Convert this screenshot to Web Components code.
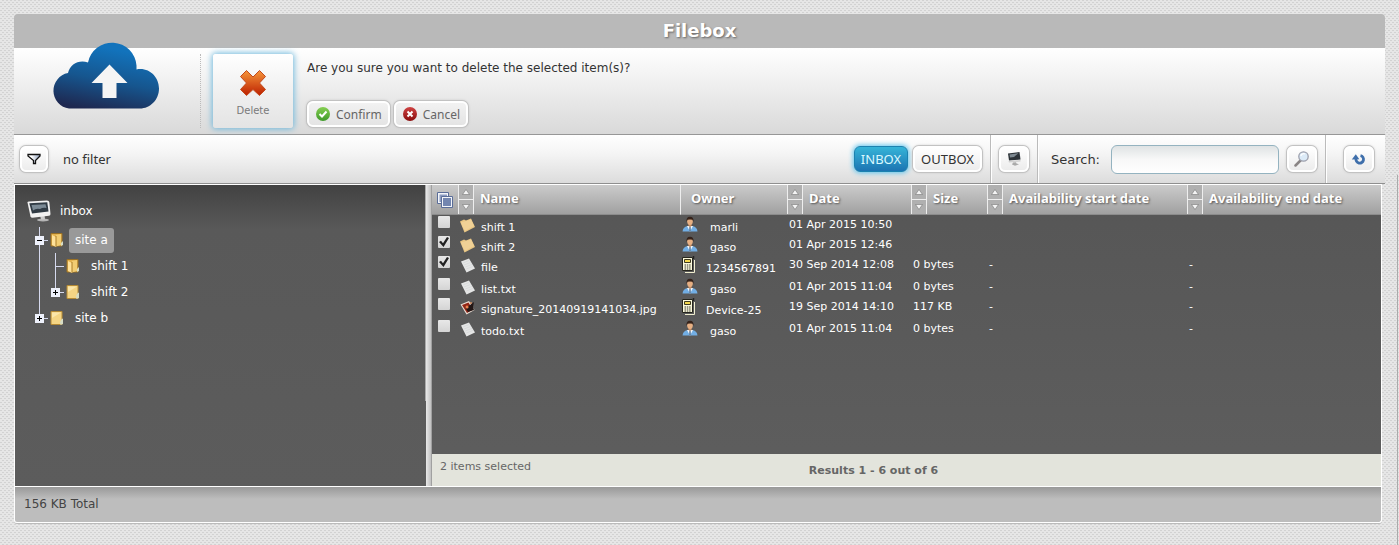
<!DOCTYPE html>
<html lang="en">
<head>
<meta charset="utf-8">
<title>Filebox</title>
<style>
  html { min-height: 100%; background: #e7e7e7; }
  body {
    margin: 0;
    padding: 14px;
    min-height: 100vh;
    box-sizing: border-box;
    font: 12px/18px "DejaVu Sans", Verdana, sans-serif;
    color: #333;
    /* page edge on the right, then the woven dots */
    background:
      linear-gradient(#aaa, #aaa) right 1px top 175px / 1px 100% no-repeat,
      conic-gradient(from 90deg at 2px 1px, transparent 270deg, #d2d2d2 0) 0 0 / 4px 4px,
      conic-gradient(from 90deg at 2px 1px, transparent 270deg, #d2d2d2 0) 2px 2px / 4px 4px,
      #e6e6e6;
  }
</style>
</head>
<body>
<file-box heading="Filebox">
  <confirm-ribbon slot="ribbon" question="Are you sure you want to delete the selected item(s)?">
    <box-button slot="actions" icon="ok">Confirm</box-button>
    <box-button slot="actions" icon="no">Cancel</box-button>
  </confirm-ribbon>
  <tool-bar slot="toolbar"></tool-bar>
  <folder-tree slot="tree" label="inbox">
    <tree-node label="site a" state="open" folder="open" selected>
      <tree-node label="shift 1" folder="open"></tree-node>
      <tree-node label="shift 2" state="closed" last></tree-node>
    </tree-node>
    <tree-node label="site b" state="closed" last></tree-node>
  </folder-tree>
  <file-list slot="list"></file-list>
  <span slot="status">156 KB Total</span>
</file-box>

<script>
const ICONS = {
  cloud: `<svg width="108" height="68" viewBox="0 0 108 68">
    <defs><linearGradient id="c" x1=".6" y1="0" x2=".3" y2="1"><stop offset=".1" stop-color="#1273bc"/><stop offset=".55" stop-color="#16568f"/><stop offset="1" stop-color="#1e2850"/></linearGradient></defs>
    <path fill="url(#c)" d="M18 67.500A18 18 0 0 1 17 32C19 23 28 18.500 37 21.500A24.500 24.500 0 0 1 85.500 24.500L85.500 28.500C98 26 108 36 108 47.500C108 59 99 67.500 89 67.500Z"/>
    <path fill="#f5f5f5" d="M58.500 23.500L76.500 42H65.500V57H51.500V42H40.500Z"/></svg>`,
  cross: `<svg width="28" height="28" viewBox="0 0 28 28">
    <defs><linearGradient id="x" x2="0" y2="1"><stop offset=".1" stop-color="#f08a35"/><stop offset=".9" stop-color="#c22b06"/></linearGradient></defs>
    <path fill="url(#x)" stroke="#c2491c" d="M7.500 1.500L14 8L20.500 1.500L26.500 7.500L20.500 14L26.500 20.500L20.500 26.500L14 20.500L7.500 26.500L1.500 20.500L7.500 14L1.500 7.500Z" stroke-linejoin="round"/></svg>`,
  ok: `<svg width="16" height="16" viewBox="0 0 16 16">
    <defs><linearGradient id="g" x2="0" y2="1"><stop stop-color="#86cf52"/><stop offset="1" stop-color="#3f9a2a"/></linearGradient></defs>
    <circle cx="8" cy="8" r="7" fill="url(#g)"/><path d="M4.500 8L7 10.500L11.500 5.500" fill="none" stroke="#fff" stroke-width="2"/></svg>`,
  no: `<svg width="16" height="16" viewBox="0 0 16 16">
    <defs><linearGradient id="r" x2="0" y2="1"><stop stop-color="#cf4343"/><stop offset="1" stop-color="#8a0d0d"/></linearGradient></defs>
    <circle cx="8" cy="8" r="7" fill="url(#r)"/><path d="M5.500 5.500L10.500 10.500M10.500 5.500L5.500 10.500" stroke="#fff" stroke-width="2"/></svg>`,
  funnel: `<svg width="14" height="14" viewBox="1 1 14 14">
    <defs><linearGradient id="f"><stop offset=".3" stop-color="#fff"/><stop offset="1" stop-color="#8fa0bd"/></linearGradient></defs>
    <path d="M2 3.500H14V5L9.500 9.500V12.500H7.500V9.500L2 5Z" fill="url(#f)" stroke="#111" stroke-width="1.300"/></svg>`,
  screen: `<svg width="16" height="16" viewBox="0 0 16 16">
    <path d="M2 2.500L13.500 1L14.500 8.500L3 9.500Z" fill="#2c3237"/><path d="M3.500 3.500L12.500 2.200L8 6L4 6.500Z" fill="#7d8890"/>
    <path d="M2.500 10L14.500 9V10.500L3 11.500Z" fill="#d0d0d0"/><path d="M7 11.500L10 11.300L10.500 12.500L13 13.300L9 14.800L6 13.500Z" fill="#aaa"/></svg>`,
  lens: `<svg width="16" height="16" viewBox="1 1 16 16">
    <path d="M7.500 10.500L2.500 15.500" stroke="#8a8585" stroke-width="2.500" stroke-linecap="round"/>
    <circle cx="10.500" cy="6.500" r="4.700" fill="#dcebf8" stroke="#9c9fac" stroke-width="1.300"/><path d="M7.800 6A3 3 0 0 1 12 4" fill="none" stroke="#fff" stroke-width="1.300"/></svg>`,
  refresh: `<svg width="16" height="16" viewBox="0 0 16 16">
    <path d="M5 7.500A3.800 3.800 0 1 0 9.500 4.600" fill="none" stroke="#3f6fab" stroke-width="2.800"/>
    <path d="M.8 8.500L4.800 3.200L8.300 8.300Z" fill="#3f6fab"/></svg>`,
  monitor: `<svg width="24" height="22" viewBox="0 0 24 22">
    <ellipse cx="16" cy="20" rx="6" ry="1.500" fill="#b5b5b5"/><path d="M13 15L17.500 14.500L18 19.500H14Z" fill="#ccc"/>
    <path d="M.5 2.500Q.5 1.500 2 1.400L20 .5Q22 .5 22.300 2L23.500 14Q23.500 15.500 22 15.700L5.500 17.800Q4 17.800 3.500 16.500Z" fill="#f2f2f2"/>
    <path d="M2.300 3.200L20.300 2.300L21.500 11.500L5 13.500Z" fill="#303b44"/><path d="M4.500 5L18.500 4.200L19.500 8Q16 7 13 9Q9 8 6 10.500Z" fill="#7b8a95"/></svg>`,
  folderOpen: `<svg width="14" height="16" viewBox="0 0 14 16">
    <path d="M1 1.500H12V14H1Z" fill="#e3b24e" stroke="#9a7125"/><path d="M2 3L6 5V15L2 13Z" fill="#ffe199"/><path d="M6 3L11 2V13L6 14.500Z" fill="#f1cc72"/><path d="M6 4V14.500" stroke="#a97c28"/><path d="M11 11L13 9V13L11 14Z" fill="#d6dcc5"/></svg>`,
  folder: `<svg width="14" height="16" viewBox="0 0 14 16">
    <path d="M1 1.500H12V14.500H1Z" fill="#f5d584" stroke="#b58a35"/><path d="M2 2.500H11L2 8Z" fill="#fbe6aa"/><path d="M10 12L12 8.500L13 9V14L10.500 15Z" fill="#d6dcc5"/></svg>`,
  dir: `<svg width="18" height="17" viewBox="0 0 18 17"><path d="M1 4.500L5 2.500L7 3.500L12 1.500L16 10L5.500 15.500Z" fill="#e9c684"/><path d="M1.800 5.500L12 2.500L15 9L6 14Z" fill="#f0d196"/></svg>`,
  page: `<svg width="18" height="17" viewBox="0 0 18 17"><path d="M2 4.500L10 1.500L16 11.500L7.500 15.500Z" fill="#e4e5e5"/><path d="M4 6L10 3.500M5 8L11.500 5.500M6.300 10L12.800 7.500M7.300 12L13.800 9.500" stroke="#d6d8d9" stroke-width=".8"/></svg>`,
  image: `<svg width="18" height="17" viewBox="0 0 18 17"><path d="M1.500 5.500L10 2L15.500 11L7.500 15.500Z" fill="#eadfd5"/><path d="M3 6L9.500 3.500L14 10.500L8 14Z" fill="#942516"/><path d="M6 8C8 6 9 8 11 6L15 3L14 8L15 11L9 13Z" fill="#231716"/><circle cx="8" cy="8" r="1.600" fill="#ec814d"/><circle cx="12" cy="4" r="1" fill="#cf8b60"/></svg>`,
  user: `<svg width="16" height="17" viewBox="0 0 16 17">
    <path d="M.5 15.500Q1 10.500 6 10H10Q15 10.500 15.500 15.500Z" fill="#72aee4"/><path d="M5 10L8 15.500L11 10Z" fill="#f5f7fa"/><path d="M7.300 10.500H8.700L9 15H7Z" fill="#6787a6"/>
    <path d="M6.500 7H9.500V10L8 11L6.500 10Z" fill="#c98e62"/><ellipse cx="8" cy="5.300" rx="2.800" ry="3.800" fill="#e7b083"/><path d="M4.500 6Q4 .8 8 .8Q12 .8 11.500 6L10.500 3.800Q8 3 5.500 3.800Z" fill="#35231b"/></svg>`,
  device: `<svg width="13" height="17" viewBox="0 0 13 17">
    <path d="M3 16.500H12.500V4" fill="none" stroke="#f1efcf"/><path d="M11.500 0V3" stroke="#222" stroke-width="1.500"/><path d="M.5 1.500H10.500V14.500H.5Z" fill="#fbf9dc" stroke="#26261d"/>
    <path d="M2.500 3.500H8.500V6.500H2.500Z" fill="#f4d84e" stroke="#3d391f"/><path d="M2.500 9H9M2.500 11H9M2.500 13H9" stroke="#33332a" stroke-dasharray="1.500 .8"/></svg>`,
  copies: `<svg width="18" height="18" viewBox="0 0 18 18"><path d="M1.500 1.500H12.500V12.500H1.500Z" fill="#f3f5f9" stroke="#5a6d98"/><path d="M3.500 3.500H11V11H3.500Z" fill="#8b9bc0"/><path d="M5.500 5.500H16.500V16.500H5.500Z" fill="#f3f5f9" stroke="#5a6d98"/><path d="M7 7H15V15H7Z" fill="#7386b0"/></svg>`
};

// Shared base: puts styles and markup into an open shadow root
class BoxElement extends HTMLElement {
  connectedCallback() {
    if (this.shadowRoot) return;
    this.attachShadow({ mode: 'open' });
    this.shadowRoot.innerHTML = this.render();
  }
}

class FileBox extends BoxElement {
  render() {
    return `
      <style>
        :host { display: block; }
        h1 {
          margin: 0; font-size: 18px; line-height: 34px; text-align: center; color: #fff;
          background: #b9b9b9; border-radius: 4px 4px 0 0; text-shadow: 1px 1px 2px #666;
        }
        main {
          display: grid; grid-template-columns: 411px 6px 1fr; margin-right: 3px;
          border: 1px solid #fff; box-sizing: border-box; min-height: 303px;
        }
        .split { background: linear-gradient(90deg, #e8e8e8, #c2c2c2 80%, #888); }
        footer {
          margin-right: 3px; padding: 8px 9px 9px; color: #444;
          border: 1px solid #fff; border-top: 0; border-radius: 0 0 3px 3px;
          background: linear-gradient(#999, #bdbdbd 12px);
          box-shadow: 0 1px #bbb;
        }
      </style>
      <header><h1>${this.getAttribute('heading')}</h1></header>
      <slot name="ribbon"></slot>
      <slot name="toolbar"></slot>
      <main>
        <slot name="tree"></slot>
        <div class="split"></div>
        <slot name="list"></slot>
      </main>
      <footer><slot name="status"></slot></footer>`;
  }
}

class BoxButton extends BoxElement {
  render() {
    const icon = this.getAttribute('icon');
    const label = this.getAttribute('label');
    return `
      <style>
        :host { display: inline-block; }
        button {
          display: flex; align-items: center; justify-content: center; gap: 5px;
          box-sizing: border-box; height: 26px; padding: 0 6px;
          font: 12px "Noto Sans", sans-serif; color: #666; cursor: pointer;
          border: 2px solid #fff; border-radius: 6px;
          background: linear-gradient(#f2f2f2, #e4e4e4);
          box-shadow: 0 0 0 1px #c2c2c2, 0 0 3px #aaa;
        }
        :host([tool]) button { gap: 0; color: #333; font-size: 13px; background: linear-gradient(#fff, #ececec); }
        :host([icon][tool]) button { padding: 0 5px; }
        :host([active]) button {
          color: #d8f8ff; border: 1px solid #1c82b0;
          background: linear-gradient(#35b4d8, #1c74b2);
          box-shadow: 0 0 5px 1px #5cc4ee;
        }
        svg { display: block; }
      </style>
      <button type="button"${label ? ` aria-label="${label}"` : ''}>${icon ? ICONS[icon] : ''}<slot></slot></button>`;
  }
}

class ConfirmRibbon extends BoxElement {
  render() {
    return `
      <style>
        :host {
          display: flex; height: 86px; border-bottom: 1px solid #979797;
          background: linear-gradient(#fff, #ececec 50%, #d9d9d9);
        }
        /* the cloud rises over the title bar */
        .logo { width: 186px; margin-top: -7px; padding-left: 37px; box-sizing: border-box; }
        .tile-area { padding: 6px 14px 6px 12px; margin: 0; }
        .sep { border-left: 1px dotted #bbb; margin: 6px 0; }
        .tile {
          display: flex; flex-direction: column; align-items: center; gap: 8px;
          width: 80px; height: 74px; padding: 15px 0 0; border: 0; border-radius: 3px;
          font: 10px/12px "DejaVu Sans", Verdana, sans-serif; color: #7a7a7a; cursor: pointer;
          background: linear-gradient(#fff, #f0f0f0 50%, #e4e4e4);
          box-shadow: 0 0 6px 1px #6fb8dc;
        }
        .ask { padding-top: 11px; }
        p { margin: 0 0 24px; }
        .actions { display: flex; gap: 4px; }
        svg { display: block; }
      </style>
      <div class="logo">${ICONS.cloud}</div>
      <div class="sep"></div>
      <div class="tile-area"><button class="tile" type="button">${ICONS.cross}<span>Delete</span></button></div>
      <div class="ask">
        <p>${this.getAttribute('question')}</p>
        <div class="actions"><slot name="actions"></slot></div>
      </div>`;
  }
}

class ToolBar extends BoxElement {
  render() {
    return `
      <style>
        :host {
          display: flex; align-items: center; height: 48px; font: 13px "Noto Sans", sans-serif;
          border-bottom: 1px solid #8f8f8f; background: linear-gradient(#fff, #f4f4f4 40%, #dcdcdc);
        }
        .filter { display: flex; align-items: center; gap: 15px; padding-left: 6px; flex: 1; }
        .group { display: flex; align-items: center; gap: 5px; align-self: stretch; padding: 0 8px; border-left: 1px solid #bbb; box-shadow: inset 1px 0 #fff; }
        .group.boxes { border: 0; box-shadow: none; }
        .group.search { padding-left: 13px; }
        .search box-button { margin-left: 3px; }
        .group.end { padding: 0 11px 0 18px; }
        label { font: 13px "DejaVu Sans", Verdana, sans-serif; }
        input {
          width: 168px; height: 29px; box-sizing: border-box; margin-left: 6px; padding: 0 6px; font: inherit;
          border: 1px solid #94b3c0; border-radius: 6px; outline: 0;
          background: linear-gradient(#dfe3e4, #f8f8f8 50%, #fff);
        }
      </style>
      <div class="filter"><box-button tool icon="funnel" label="Filter"></box-button><span>no filter</span></div>
      <div class="group boxes"><box-button tool active>INBOX</box-button><box-button tool>OUTBOX</box-button></div>
      <div class="group"><box-button tool icon="screen" label="Devices"></box-button></div>
      <div class="group search"><label for="q">Search:</label><input id="q" type="text"><box-button tool icon="lens" label="Search"></box-button></div>
      <div class="group end"><box-button tool icon="refresh" label="Refresh"></box-button></div>`;
  }
}

class FolderTree extends BoxElement {
  render() {
    return `
      <style>
        :host {
          display: block; padding: 10px 12px; color: #fff;
          background:
            linear-gradient(#aaa, #aaa) right top / 1px 216px no-repeat,
            linear-gradient(#424242, #595959 44px, #5c5c5c);
        }
        .root { display: flex; align-items: center; gap: 9px; height: 32px; color: inherit; text-decoration: none; }
        .nodes { padding-left: 8px; }
      </style>
      <a class="root" href="#inbox">${ICONS.monitor}<span>${this.getAttribute('label')}</span></a>
      <div class="nodes"><slot></slot></div>`;
  }
}

class TreeNode extends BoxElement {
  render() {
    const state = this.getAttribute('state');
    const icon = this.getAttribute('folder') === 'open' ? ICONS.folderOpen : ICONS.folder;
    const toggle = state
      ? `<button type="button" aria-label="Toggle ${this.getAttribute('label')}"><svg width="9" height="9" viewBox="0 0 9 9"><path d="M2 4.500H7${state === 'closed' ? 'M4.500 2V7' : ''}" stroke="#000"/></svg></button>`
      : '<i></i>';
    return `
      <style>
        :host { display: block; background: linear-gradient(#d5d9ee, #d5d9ee) 4px 0 / 1px 100% no-repeat; }
        :host([last]) { background-size: 1px 13px; }
        .row { display: flex; align-items: center; height: 26px; }
        button { display: block; width: 9px; height: 9px; padding: 0; border: 0; background: #eef1fb; }
        i { width: 5px; height: 1px; margin-left: 4px; background: #d5d9ee; }
        b { width: 4px; height: 1px; margin-right: 2px; background: #d5d9ee; }
        a { margin-left: 5px; padding: 0 6px; line-height: 25px; border-radius: 3px; color: #fff; text-decoration: none; }
        :host([selected]) a { background: #999; }
        .kids { padding-left: 16px; }
        svg { display: block; }
      </style>
      <div class="row">${toggle}<b></b>${icon}<a href="#">${this.getAttribute('label')}</a></div>
      <div class="kids"><slot></slot></div>`;
  }
}

class SortArrows extends BoxElement {
  render() {
    return `
      <style>
        :host { display: flex; flex-direction: column; width: 14px; border-left: 1px solid #eee; border-right: 1px solid #eee; }
        button { flex: 1; display: flex; align-items: center; justify-content: center; padding: 0; border: 0; background: #b0b0b0; }
        button + button { border-top: 1px solid #eee; }
        path { fill: #f4f4f4; stroke: #777; stroke-width: .6; }
        :host([sorted]) button:first-child path { fill: #58a6cf; stroke: #4c95bd; }
      </style>
      <button type="button" aria-label="Sort ascending"><svg width="8" height="6"><path d="M4 .5L7.500 5.500H.5Z"/></svg></button>
      <button type="button" aria-label="Sort descending"><svg width="8" height="6"><path d="M4 5.500L7.500 .5H.5Z"/></svg></button>`;
  }
}

class FileList extends BoxElement {
  get files() {
    return [
      ['dir', 'shift 1', 'user', 'marli', '01 Apr 2015 10:50', '', false],
      ['dir', 'shift 2', 'user', 'gaso', '01 Apr 2015 12:46', '', true],
      ['page', 'file', 'device', '1234567891', '30 Sep 2014 12:08', '0 bytes', true],
      ['page', 'list.txt', 'user', 'gaso', '01 Apr 2015 11:04', '0 bytes', false],
      ['image', 'signature_20140919141034.jpg', 'device', 'Device-25', '19 Sep 2014 14:10', '117 KB', false],
      ['page', 'todo.txt', 'user', 'gaso', '01 Apr 2015 11:04', '0 bytes', false]
    ];
  }

  row([icon, name, kind, owner, date, size, checked]) {
    const avail = size ? '-' : '';
    return `<tr class="${kind}">
      <td><input type="checkbox" aria-label="Select ${name}"${checked ? ' checked' : ''}></td>
      <td><div class="item">${ICONS[icon]}<span>${name}</span></div></td>
      <td><div class="owner">${ICONS[kind]}<span>${owner}</span></div></td>
      <td>${date}</td><td>${size}</td><td>${avail}</td><td>${avail}</td>
    </tr>`;
  }

  head(label, sort = '<sort-arrows></sort-arrows>') {
    return `<th><div class="head">${sort}<span>${label}</span></div></th>`;
  }

  render() {
    return `
      <style>
        :host {
          display: flex; flex-direction: column; min-width: 0;
          font-size: 11px; color: #fff;
          background: linear-gradient(#565656, #5e5e5e);
        }
        table { width: 100%; table-layout: fixed; border-collapse: collapse; }
        .c1 { width: 26px; } .c2 { width: 222px; } .c3 { width: 107px; }
        .c4 { width: 124px; } .c5 { width: 76px; } .c6 { width: 200px; }
        th, td { padding: 0; text-align: left; vertical-align: top; white-space: nowrap; }
        thead tr { background: linear-gradient(#cbcbcb, #9f9f9f); }
        .head {
          display: flex; align-items: stretch; height: 30px; box-sizing: border-box;
          border-bottom: 1px solid #8c8c8c;
          font: bold 13px/27px "Noto Sans", sans-serif; text-shadow: 1px 1px 2px #555;
        }
        .head span { padding-left: 6px; }
        .plain { border-left: 1px solid #eee; }
        .plain span { padding-left: 10px; }
        .all { align-items: center; justify-content: center; }
        .all button { padding: 0; border: 0; background: none; }
        .user, .user td { height: 20px; }
        .device, .device td { height: 22px; }
        td { line-height: 20px; padding-left: 2px; }
        .item, .owner { display: flex; height: 20px; }
        .item svg { margin: 2px 4px 0 -1px; height: 17px; }
        .item span, .user .owner span { padding-top: 3px; }
        .user .owner { gap: 12px; }
        .device .owner { gap: 11px; }
        .device .owner span { padding-top: 4px; }
        .owner svg { margin-top: 1px; flex: none; }
        input {
          appearance: none; display: grid; place-items: center; width: 12px; height: 12px;
          margin: 1px 0 0 4px; background: linear-gradient(#e8e8e8, #d4d4d4); border-radius: 1px;
        }
        input:checked::before {
          content: ""; width: 10px; height: 10px; background: #222;
          clip-path: polygon(0 50%, 20% 38%, 40% 62%, 80% 0, 100% 10%, 45% 100%);
        }
        svg { display: block; }
        footer {
          display: grid; grid-template-columns: 1fr auto 1fr; margin-top: auto; height: 32px;
          box-sizing: border-box; padding: 4px 8px; color: #666; background: #e3e4dc;
        }
        footer b { padding-top: 4px; margin-right: 66px; }
      </style>
      <table>
        <colgroup><col class="c1"><col class="c2"><col class="c3"><col class="c4"><col class="c5"><col class="c6"><col></colgroup>
        <thead><tr>
          <th><div class="head all"><button type="button" aria-label="Select all">${ICONS.copies}</button></div></th>
          ${this.head('Name', '<sort-arrows sorted></sort-arrows>')}
          <th><div class="head plain"><span>Owner</span></div></th>
          ${['Date', 'Size', 'Availability start date', 'Availability end date'].map(t => this.head(t)).join('')}
        </tr></thead>
        <tbody>${this.files.map(f => this.row(f)).join('')}</tbody>
      </table>
      <footer><span>2 items selected</span><b>Results 1 - 6 out of 6</b></footer>`;
  }
}

customElements.define('file-box', FileBox);
customElements.define('box-button', BoxButton);
customElements.define('confirm-ribbon', ConfirmRibbon);
customElements.define('tool-bar', ToolBar);
customElements.define('folder-tree', FolderTree);
customElements.define('tree-node', TreeNode);
customElements.define('sort-arrows', SortArrows);
customElements.define('file-list', FileList);
</script>
</body>
</html>
